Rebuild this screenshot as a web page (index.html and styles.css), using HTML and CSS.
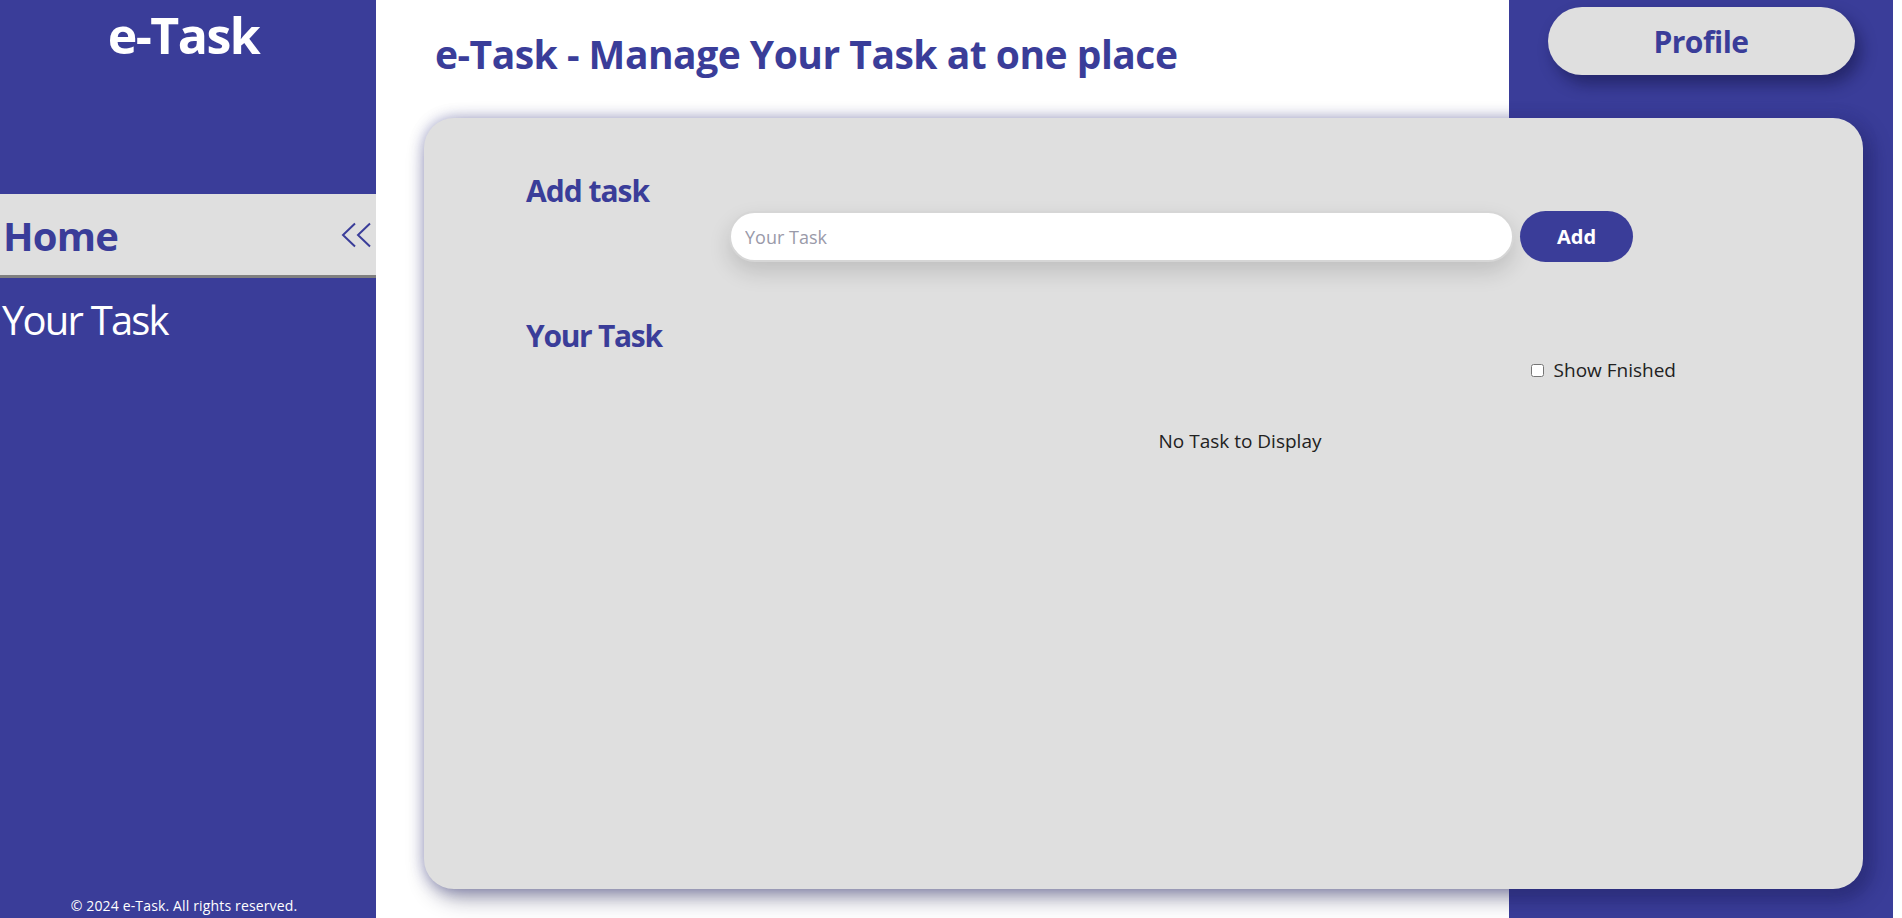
FILE: index.html
```html
<!DOCTYPE html>
<html lang="en">
<head>
<meta charset="utf-8">
<title>e-Task</title>
<link rel="stylesheet" href="styles.css">
</head>
<body>
<div class="app">
  <aside class="sidebar">
    <div class="brand">e-Task</div>
    <nav class="nav">
      <div class="nav-item active">
        <span>Home</span>
        <svg class="collapse" width="31" height="26" viewBox="0 0 31 26" aria-hidden="true">
          <polyline points="14,1.5 2,13 14,24.5" fill="none" stroke="#3a3d99" stroke-width="2"/>
          <polyline points="29,1.5 17,13 29,24.5" fill="none" stroke="#3a3d99" stroke-width="2"/>
        </svg>
      </div>
      <div class="nav-item">Your Task</div>
    </nav>
    <footer class="copyright">© 2024 e-Task. All rights reserved.</footer>
  </aside>
  <main class="main">
    <div class="panel"></div>
    <h1 class="page-title">e-Task - Manage Your Task at one place</h1>
    <div class="profile-cell"><button class="profile-btn">Profile</button></div>
    <section class="card">
      <h2 class="section-title">Add task</h2>
      <div class="add-row">
        <input class="task-input" type="text" placeholder="Your Task">
        <button class="add-btn">Add</button>
      </div>
      <h2 class="section-title your-task">Your Task</h2>
      <label class="show-row"><input type="checkbox" class="show-check"><span>Show Fnished</span></label>
      <p class="empty">No Task to Display</p>
    </section>
  </main>
</div>
</body>
</html>
```

FILE: styles.css
```css
* { box-sizing: border-box; }
html, body { margin: 0; padding: 0; }
body {
  font-family: "Open Sans", "Noto Sans", sans-serif;
  background: #ffffff;
  color: #222;
}
.app {
  display: flex;
  height: 100vh;
}
.sidebar {
  width: 376px;
  flex: 0 0 376px;
  background: #3a3d99;
  color: #fff;
  display: flex;
  flex-direction: column;
}
.brand {
  font-size: 50px;
  font-weight: 700;
  line-height: 60px;
  text-align: center;
  margin-top: 5px;
  padding-right: 9px;
  letter-spacing: -1.5px;
}
.nav { margin-top: 129px; }
.nav-item {
  font-size: 40px;
  line-height: 48px;
  padding-left: 2px;
  margin-top: 18px;
  letter-spacing: -1.8px;
}
.nav-item.active {
  margin-top: 0;
  height: 84px;
  background: #dfdfdf;
  color: #3a3d99;
  font-weight: 700;
  border-bottom: 3px solid #808080;
  display: flex;
  align-items: center;
  justify-content: space-between;
  padding-left: 3px;
  padding-right: 4px;
  padding-top: 3px;
  letter-spacing: -0.8px;
}
.collapse { display: block; margin-top: -3px; }
.copyright {
  margin-top: auto;
  font-size: 14px;
  line-height: 20px;
  text-align: center;
  padding-bottom: 2px;
  padding-right: 8px;
  letter-spacing: 0.15px;
}
.main {
  flex: 0 0 1517px;
  display: grid;
  grid-template-columns: 1133px 384px;
  grid-template-rows: 118px 1fr;
}
.panel {
  grid-column: 2;
  grid-row: 1 / 3;
  background: #3a3d99;
}
.page-title {
  grid-column: 1;
  grid-row: 1;
  margin: 0;
  padding: 30px 0 0 59px;
  font-size: 39px;
  line-height: 48px;
  font-weight: 700;
  color: #3a3d99;
  white-space: nowrap;
  letter-spacing: -0.5px;
}
.profile-cell {
  grid-column: 2;
  grid-row: 1;
  display: flex;
  justify-content: center;
  align-items: flex-start;
  padding-top: 7px;
  z-index: 1;
}
.profile-btn {
  width: 307px;
  height: 68px;
  border: none;
  border-radius: 34px;
  background: #dfdfdf;
  color: #3a3d99;
  font-family: inherit;
  font-size: 30px;
  font-weight: 700;
  letter-spacing: -0.5px;
  box-shadow: 6px 9px 16px rgba(10, 10, 50, 0.45);
  cursor: pointer;
}
.card {
  grid-column: 1 / 3;
  grid-row: 2;
  z-index: 1;
  margin: 0 30px 29px 48px;
  background: #dfdfdf;
  border-radius: 30px;
  box-shadow: 0 0 14px rgba(58, 61, 153, 0.35), 6px 8px 22px rgba(15, 15, 60, 0.45);
  padding: 53px 0 0 102px;
}
.section-title {
  margin: 0;
  font-size: 30px;
  line-height: 40px;
  font-weight: 700;
  color: #3a3d99;
  letter-spacing: -1px;
}
.your-task { letter-spacing: -1.3px; }
.add-row {
  display: flex;
  align-items: flex-start;
  gap: 6px;
  margin: 0 0 0 203px;
}
.task-input {
  width: 785px;
  height: 51px;
  border: 2px solid #d6d6d6;
  border-radius: 26px;
  padding: 0 14px;
  font-family: inherit;
  font-size: 18px;
  background: #fff;
  box-shadow: 0 10px 22px rgba(0, 0, 0, 0.14);
  outline: none;
}
.task-input::placeholder { color: #9a9aa9; }
.add-btn {
  width: 113px;
  height: 51px;
  border: none;
  border-radius: 26px;
  background: #3a3d99;
  color: #fff;
  font-family: inherit;
  font-size: 20px;
  font-weight: 700;
}
.your-task { margin-top: 54px; }
.show-row {
  display: flex;
  justify-content: flex-end;
  align-items: center;
  gap: 10px;
  margin: 0 187px 0 0;
  font-size: 19px;
  line-height: 28px;
  color: #222;
}
.show-check { margin: 0; width: 13px; height: 13px; }
.empty {
  margin: 43px 0 0 91px;
  text-align: center;
  font-size: 19px;
  line-height: 28px;
  color: #222;
}
```
